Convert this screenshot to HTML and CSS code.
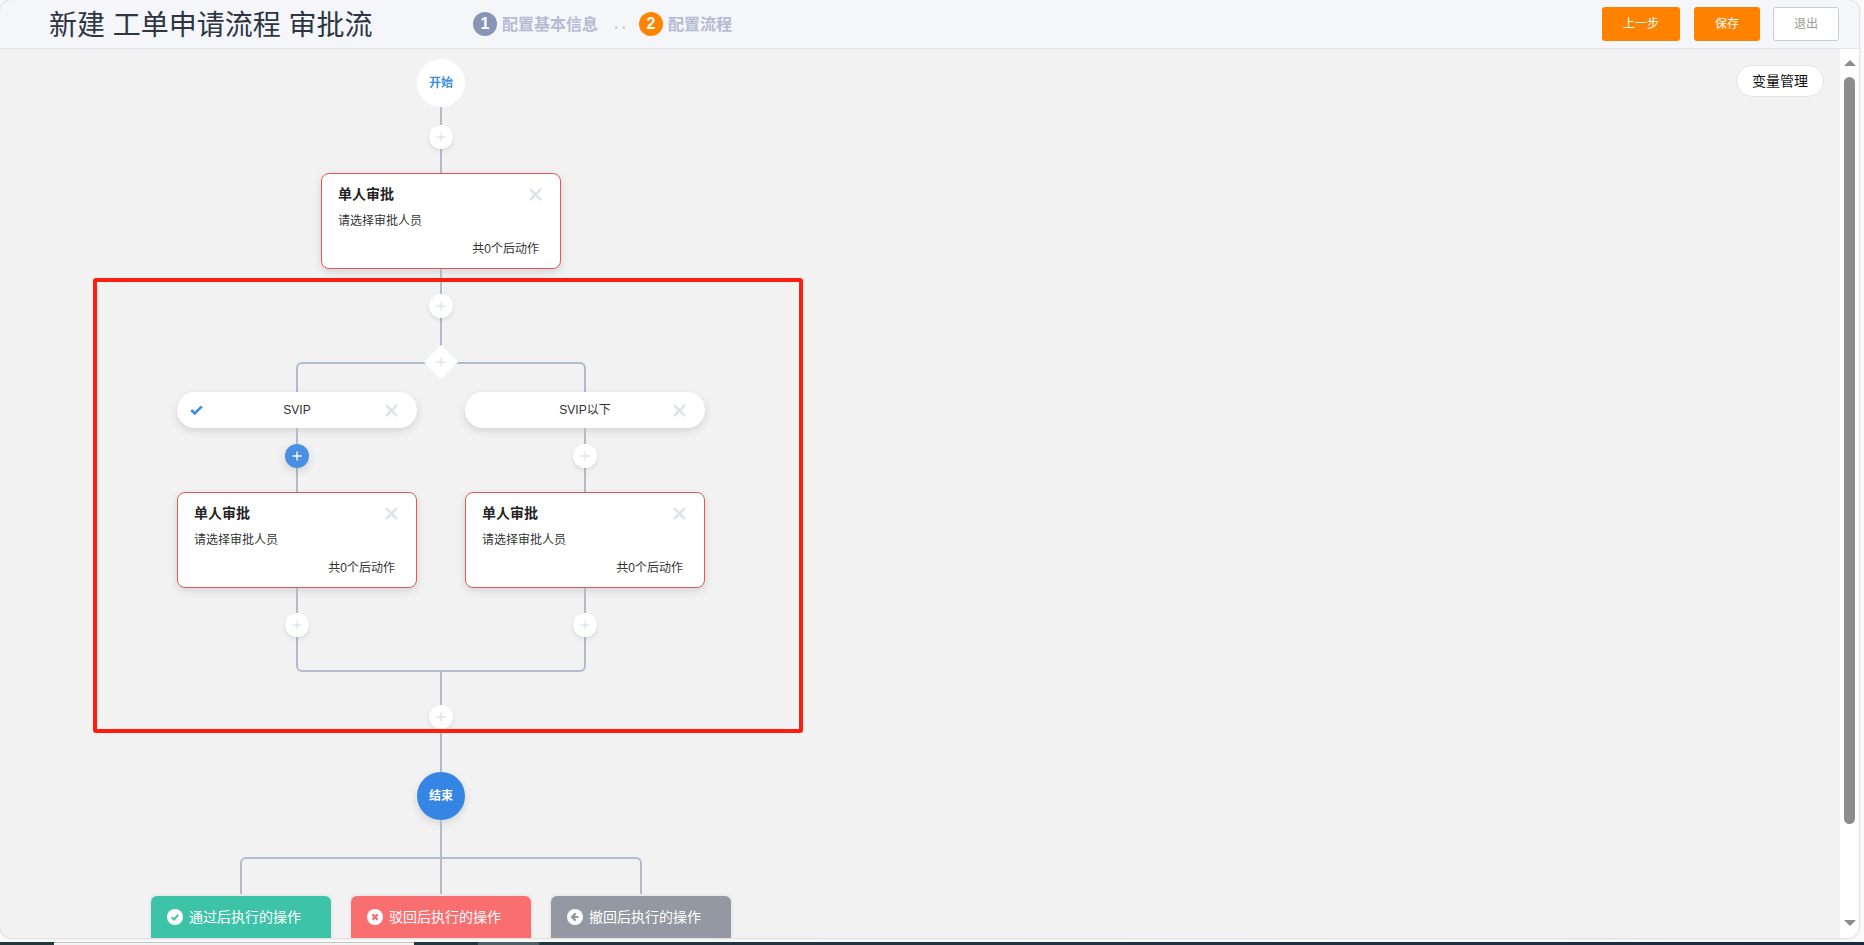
FILE: index.html
```html
<!DOCTYPE html>
<html lang="zh-CN">
<head>
    <meta charset="UTF-8">
    <title>新建 工单申请流程 审批流</title>
    <link rel="stylesheet" href="styles.css">
</head>
<body>
    <svg class="icon-defs" width="0" height="0">
        <symbol id="icon-close" viewBox="0 0 13 13"><path d="M1 1l11 11M12 1L1 12" fill="none" stroke="currentColor" stroke-width="2.6"/></symbol>
        <symbol id="icon-plus" viewBox="0 0 10 10"><path d="M5 .5v9M.5 5h9" fill="none" stroke="currentColor" stroke-width="1.3"/></symbol>
    </svg>

    <div class="window">
        <div class="header">
            <h1 class="title">新建 工单申请流程 审批流</h1>
            <div class="steps">
                <span class="step-num">1</span>
                <span class="step-text">配置基本信息</span>
                <span class="step-dots">..</span>
                <span class="step-num step-num-active">2</span>
                <span class="step-text">配置流程</span>
            </div>
            <div class="header-actions">
                <button class="btn btn-primary btn-prev">上一步</button>
                <button class="btn btn-primary">保存</button>
                <button class="btn btn-plain">退出</button>
            </div>
        </div>

        <div class="main">
            <div class="canvas">
                <div class="flow">
                    <div class="circle circle-start">开始</div>
                    <div class="line h18"></div>
                    <div class="add"><svg class="add-icon"><use href="#icon-plus"/></svg></div>
                    <div class="line h24"></div>
                    <div class="card">
                        <div class="card-head"><span>单人审批</span><svg class="close-icon"><use href="#icon-close"/></svg></div>
                        <div class="card-sub">请选择审批人员</div>
                        <div class="card-foot">共0个后动作</div>
                    </div>
                    <div class="line h25"></div>
                    <div class="add"><svg class="add-icon"><use href="#icon-plus"/></svg></div>
                    <div class="line h44"></div>

                    <div class="branch-top">
                        <div class="diamond"><svg class="add-icon"><use href="#icon-plus"/></svg></div>
                    </div>
                    <div class="branch-row">
                        <div class="branch-col">
                            <div class="pill">
                                <svg class="check-icon" viewBox="0 0 13 10"><path d="M1.2 5l3.6 3.4L11.8 1.4" fill="none" stroke="currentColor" stroke-width="2.6"/></svg>
                                <span>SVIP</span>
                                <svg class="close-icon pill-close"><use href="#icon-close"/></svg>
                            </div>
                            <div class="line h16"></div>
                            <div class="add add-active"><svg class="add-icon"><use href="#icon-plus"/></svg></div>
                            <div class="line h24"></div>
                            <div class="card">
                                <div class="card-head"><span>单人审批</span><svg class="close-icon"><use href="#icon-close"/></svg></div>
                                <div class="card-sub">请选择审批人员</div>
                                <div class="card-foot">共0个后动作</div>
                            </div>
                            <div class="line h25"></div>
                            <div class="add"><svg class="add-icon"><use href="#icon-plus"/></svg></div>
                        </div>
                        <div class="branch-col">
                            <div class="pill">
                                <span class="pill-slot"></span>
                                <span>SVIP以下</span>
                                <svg class="close-icon pill-close"><use href="#icon-close"/></svg>
                            </div>
                            <div class="line h16"></div>
                            <div class="add"><svg class="add-icon"><use href="#icon-plus"/></svg></div>
                            <div class="line h24"></div>
                            <div class="card">
                                <div class="card-head"><span>单人审批</span><svg class="close-icon"><use href="#icon-close"/></svg></div>
                                <div class="card-sub">请选择审批人员</div>
                                <div class="card-foot">共0个后动作</div>
                            </div>
                            <div class="line h25"></div>
                            <div class="add"><svg class="add-icon"><use href="#icon-plus"/></svg></div>
                        </div>
                    </div>
                    <div class="branch-bottom"></div>

                    <div class="line h33"></div>
                    <div class="add"><svg class="add-icon"><use href="#icon-plus"/></svg></div>
                    <div class="line h43"></div>
                    <div class="circle circle-end">结束</div>
                    <div class="line h37"></div>

                    <div class="action-top"><div class="line"></div></div>
                    <div class="action-row">
                        <div class="action action-pass">
                            <svg class="action-icon" viewBox="0 0 16 16"><circle cx="8" cy="8" r="8" fill="#fff"/><path d="M4.6 8.2l2.4 2.3 4.3-4.6" fill="none" stroke="#3dc4a8" stroke-width="2"/></svg>
                            <span>通过后执行的操作</span>
                        </div>
                        <div class="action action-reject">
                            <svg class="action-icon" viewBox="0 0 16 16"><circle cx="8" cy="8" r="8" fill="#fff"/><path d="M5.4 5.4l5.2 5.2M10.6 5.4l-5.2 5.2" fill="none" stroke="#f96f6f" stroke-width="2.2"/></svg>
                            <span>驳回后执行的操作</span>
                        </div>
                        <div class="action action-back">
                            <svg class="action-icon" viewBox="0 0 16 16"><circle cx="8" cy="8" r="8" fill="#fff"/><path d="M8.6 4.4L5 8l3.6 3.6M5.4 8h6" fill="none" stroke="#9398a2" stroke-width="2.2"/></svg>
                            <span>撤回后执行的操作</span>
                        </div>
                    </div>
                </div>

                <button class="var-btn">变量管理</button>
                <div class="mark-frame"></div>
            </div>

            <div class="scrollbar">
                <span class="arrow-up"></span>
                <span class="thumb"></span>
                <span class="arrow-down"></span>
            </div>
        </div>
    </div>

    <div class="taskbar">
        <span class="task-dark task-first"></span>
        <span class="task-input"></span>
        <span class="task-dark task-second"></span>
        <span class="task-current"></span>
        <span class="task-rest"></span>
    </div>
</body>
</html>
```

FILE: styles.css
```css
* {
    box-sizing: border-box;
}
body {
    margin: 0;
    height: 945px;
    overflow: hidden;
    background: #fafafa;
    font-family: "Liberation Sans", "Noto Sans CJK SC", sans-serif;
    font-size: 12px;
    color: #333;
}
.icon-defs {
    position: absolute;
}
.window {
    width: 1859px;
    height: 938px;
    display: flex;
    flex-direction: column;
    overflow: hidden;
    background: #f2f2f2;
    border-radius: 12px;
    box-shadow: 0 0 3px rgba(0, 0, 0, 0.25);
}

/* header */
.header {
    height: 49px;
    flex: none;
    display: flex;
    align-items: center;
    padding: 0 20px 0 49px;
    background: #f4f6fa;
    border-bottom: 1px solid #e2e5ee;
}
.title {
    margin: -2px 0 0;
    width: 424px;
    font-size: 28px;
    font-weight: 400;
    color: #2f3542;
    white-space: nowrap;
}
.steps {
    display: flex;
    align-items: center;
}
.step-num {
    width: 24px;
    height: 24px;
    border-radius: 50%;
    background: #8a94b6;
    color: #fff;
    font-size: 16px;
    font-weight: 700;
    line-height: 24px;
    text-align: center;
}
.step-num-active {
    background: #ff8200;
}
.step-text {
    margin: -2px 0 0 5px;
    font-size: 16px;
    font-weight: 700;
    color: #b6bbd1;
}
.step-dots {
    width: 41px;
    padding-left: 16px;
    font-size: 16px;
    font-weight: 700;
    letter-spacing: 3px;
    color: #c9cddc;
}
.header-actions {
    display: flex;
    margin-left: auto;
    margin-top: -1px;
}
.btn {
    width: 66px;
    height: 34px;
    margin-left: 13px;
    padding: 0 0 2px;
    border: 1px solid transparent;
    border-radius: 3px;
    font-family: inherit;
    font-size: 12px;
}
.btn-prev {
    width: 78px;
}
.btn-primary {
    background: #ff8200;
    color: #fff;
}
.btn-primary + .btn-primary {
    margin-left: 14px;
}
.btn-plain {
    background: #fff;
    border-color: #c9cbd3;
    color: #999;
}

/* canvas */
.main {
    flex: 1;
    min-height: 0;
    display: flex;
}
.canvas {
    flex: 1;
    position: relative;
    overflow: hidden;
}
.flow {
    width: 882px;
    padding-top: 10px;
    display: flex;
    flex-direction: column;
    align-items: center;
}
.line {
    width: 2px;
    flex: none;
    background: #b1bdcc;
}
.h16 { height: 16px; }
.h18 { height: 18px; }
.h24 { height: 24px; }
.h25 { height: 25px; }
.h33 { height: 33px; }
.h37 { height: 37px; }
.h43 { height: 43px; }
.h44 { height: 44px; }

.circle {
    width: 48px;
    height: 48px;
    flex: none;
    padding-bottom: 4px;
    border-radius: 50%;
    display: flex;
    align-items: center;
    justify-content: center;
    font-weight: 700;
}
.circle-start {
    background: #fff;
    color: #3a8ee6;
}
.circle-end {
    background: #3585e5;
    color: #fff;
    box-shadow: 0 3px 8px rgba(0, 0, 0, 0.12);
}
.add {
    width: 24px;
    height: 24px;
    flex: none;
    border-radius: 50%;
    background: #fff;
    color: #dfe4eb;
    display: flex;
    align-items: center;
    justify-content: center;
    box-shadow: 0 2px 4px rgba(0, 0, 0, 0.1);
    position: relative;
    z-index: 1;
}
.add-active {
    background: #4a90e2;
    color: #fff;
    box-shadow: 0 3px 10px rgba(0, 0, 0, 0.14);
}
.add-icon {
    width: 10px;
    height: 10px;
}
.close-icon {
    width: 13px;
    height: 13px;
    flex: none;
    color: #dfe4eb;
}

.card {
    width: 240px;
    height: 96px;
    flex: none;
    padding: 7px 17px 7px 16px;
    background: #fff;
    border: 1px solid #e05a5a;
    border-radius: 8px;
    line-height: 27px;
    box-shadow: 0 3px 8px rgba(0, 0, 0, 0.12);
}
.card-head {
    display: flex;
    align-items: center;
    justify-content: space-between;
    padding-right: 1px;
    font-size: 14px;
    font-weight: 700;
    color: #222;
}
.card-foot {
    margin-top: 1px;
    padding-right: 4px;
    text-align: right;
}

/* branches */
.branch-top {
    width: 290px;
    height: 30px;
    flex: none;
    display: flex;
    justify-content: center;
    border: 2px solid #b1bdcc;
    border-bottom: 0;
    border-radius: 6px 6px 0 0;
}
.diamond {
    width: 24px;
    height: 24px;
    margin-top: -14px;
    background: #fff;
    color: #dfe4eb;
    display: flex;
    align-items: center;
    justify-content: center;
    transform: rotate(45deg);
}
.diamond .add-icon {
    transform: rotate(-45deg);
}
.branch-row {
    display: flex;
    gap: 48px;
}
.branch-col {
    width: 240px;
    display: flex;
    flex-direction: column;
    align-items: center;
}
.pill {
    width: 240px;
    height: 36px;
    flex: none;
    padding: 0 13px;
    display: grid;
    grid-template-columns: 1fr auto 1fr;
    align-items: center;
    background: #fff;
    border-radius: 18px;
    line-height: 16px;
    box-shadow: 0 3px 8px rgba(0, 0, 0, 0.12);
}
.check-icon {
    width: 13px;
    height: 10px;
    color: #3a8ee6;
}
.pill-close {
    justify-self: end;
    margin-right: 6px;
}
.branch-bottom {
    width: 290px;
    height: 35px;
    flex: none;
    border: 2px solid #b1bdcc;
    border-top: 0;
    border-radius: 0 0 6px 6px;
}

/* actions */
.action-top {
    width: 402px;
    height: 37px;
    flex: none;
    display: flex;
    justify-content: center;
    border: 2px solid #b1bdcc;
    border-bottom: 0;
    border-radius: 6px 6px 0 0;
}
.action-row {
    margin-top: 2px;
    display: flex;
    gap: 20px;
}
.action {
    width: 180px;
    height: 50px;
    padding: 0 0 9px 16px;
    display: flex;
    align-items: center;
    gap: 6px;
    border-radius: 6px 6px 0 0;
    font-size: 14px;
    color: #fff;
    box-shadow: 0 0 4px rgba(0, 0, 0, 0.1);
}
.action span {
    margin-top: -2px;
}
.action-icon {
    width: 16px;
    height: 16px;
    flex: none;
}
.action-pass { background: #3dc4a8; }
.action-reject { background: #f96f6f; }
.action-back { background: #9398a2; }

.var-btn {
    position: absolute;
    top: 16px;
    right: 16px;
    width: 88px;
    height: 32px;
    padding: 0 0 2px;
    background: #fff;
    border: 1px solid #e0e3ec;
    border-radius: 16px;
    font-family: inherit;
    font-size: 14px;
    color: #111;
}
.mark-frame {
    position: absolute;
    left: 93px;
    top: 229px;
    width: 710px;
    height: 455px;
    border: 4px solid #ff1d0e;
    border-radius: 3px;
    z-index: 2;
}

/* scrollbar */
.scrollbar {
    width: 19px;
    flex: none;
    padding: 11px 0 12px;
    display: flex;
    flex-direction: column;
    align-items: center;
    background: #fff;
}
.arrow-up, .arrow-down {
    width: 0;
    height: 0;
    border-left: 6px solid transparent;
    border-right: 6px solid transparent;
}
.arrow-up {
    border-bottom: 6px solid #8c8c8c;
}
.arrow-down {
    margin-top: auto;
    border-top: 6px solid #8c8c8c;
}
.thumb {
    width: 11px;
    height: 747px;
    margin-top: 11px;
    background: #8c8c8c;
    border-radius: 6px;
}

/* desktop strip under the window */
.taskbar {
    height: 3px;
    margin-top: 4px;
    display: flex;
}
.task-dark {
    background: #24373f;
}
.task-first {
    width: 54px;
}
.task-input {
    width: 360px;
    background: #f4f4f4;
    border-top: 1px solid #c4c4c4;
}
.task-second {
    width: 64px;
}
.task-current {
    width: 61px;
    background: #4e5f66;
}
.task-rest {
    flex: 1;
    background: linear-gradient(90deg, #24373f, #1c2a40);
}
```
